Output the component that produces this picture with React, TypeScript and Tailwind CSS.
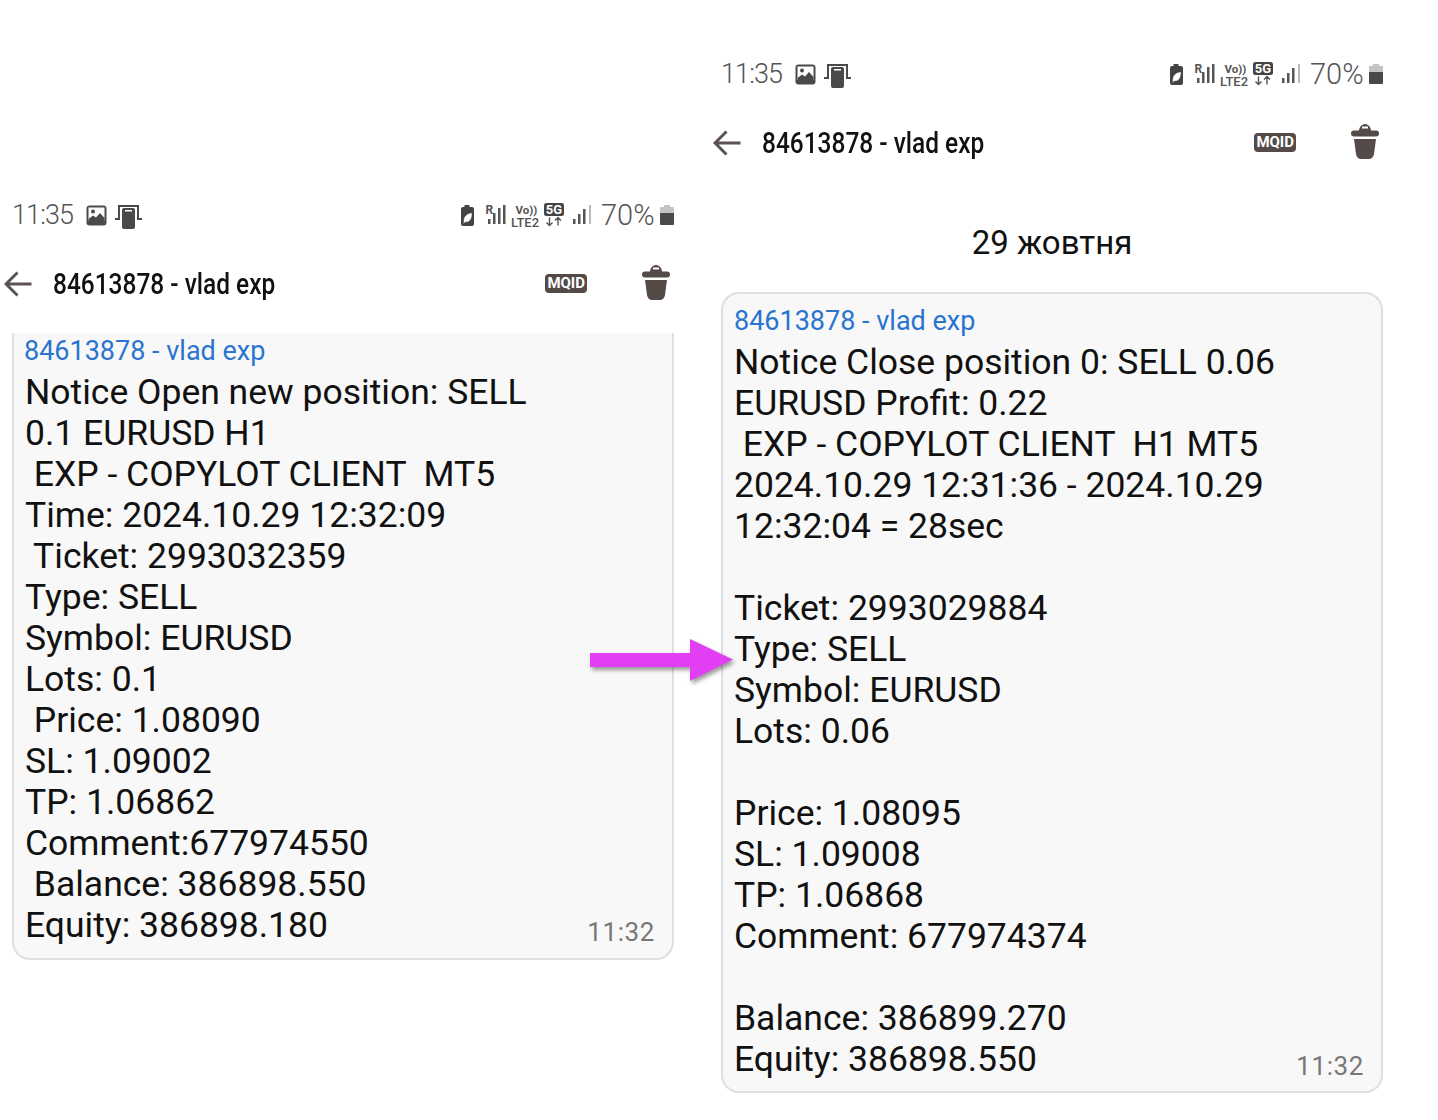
const leftLines = [
  "Notice Open new position: SELL",
  "0.1 EURUSD H1",
  " EXP - COPYLOT CLIENT  MT5",
  "Time: 2024.10.29 12:32:09",
  " Ticket: 2993032359",
  "Type: SELL",
  "Symbol: EURUSD",
  "Lots: 0.1",
  " Price: 1.08090",
  "SL: 1.09002",
  "TP: 1.06862",
  "Comment:677974550",
  " Balance: 386898.550",
  "Equity: 386898.180",
]

const rightLines = [
  "Notice Close position 0: SELL 0.06",
  "EURUSD Profit: 0.22",
  " EXP - COPYLOT CLIENT  H1 MT5",
  "2024.10.29 12:31:36 - 2024.10.29",
  "12:32:04 = 28sec",
  "",
  "Ticket: 2993029884",
  "Type: SELL",
  "Symbol: EURUSD",
  "Lots: 0.06",
  "",
  "Price: 1.08095",
  "SL: 1.09008",
  "TP: 1.06868",
  "Comment: 677974374",
  "",
  "Balance: 386899.270",
  "Equity: 386898.550",
]

function StatusBar() {
  return (
    <div className="flex h-[40px] items-center text-[#555]">
      <span className="w-[62px] whitespace-nowrap text-[27px] font-light leading-none tracking-[-0.9px]">11:35</span>
      {/* gallery */}
      <svg width="21" height="21" viewBox="0 0 21 21" className="ml-[12px]">
        <rect x="0.5" y="0.5" width="20" height="20" rx="3" fill="#4a4a4a" />
        <rect x="2.5" y="2.5" width="16" height="13.5" fill="#fff" />
        <circle cx="7" cy="6.5" r="2" fill="#4a4a4a" />
        <path d="M2.5 14l4.5-3.5 3 2 4-4.5 4.5 5v3h-16z" fill="#4a4a4a" />
      </svg>
      {/* phone link */}
      <svg width="27" height="24" viewBox="0 0 27 24" className="ml-[8px] mt-[3px]">
        <path d="M3 0h21v14h-2V2H5v12H3z" fill="#4a4a4a" />
        <path d="M0 13h5v2H0zM22 13h5v2h-5z" fill="#4a4a4a" />
        <rect x="7" y="3" width="13" height="21" rx="2" fill="#4a4a4a" />
        <rect x="10" y="5" width="7" height="1.5" fill="#fff" />
      </svg>
      <svg width="50" height="30" viewBox="0 0 50 30" className="ml-auto">
        {/* battery saver */}
        <path d="M4.500 7V5h5v2H12a2 2 0 0 1 2 2v15a2 2 0 0 1-2 2H3a2 2 0 0 1-2-2V9a2 2 0 0 1 2-2z" fill="#444" />
        <path d="M4 22c0-6 3-8 7.500-8.500 0 6-2.500 8.500-5.500 8zM3.500 23.500l4-5" fill="#fff" stroke="#fff" strokeWidth="0.6" />
        {/* SIM 1 */}
        <text x="25.500" y="14" fontSize="12" fontWeight="700" fill="#555" fontFamily="Roboto, sans-serif">R</text>
        <path d="M28 19h2.500v5H28zM33 13h2.500v11H33zM38 8h2.500v16H38zM43 5h2.500v19H43z" fill="#555" />
      </svg>
      <div className="flex h-[30px] w-[30px] flex-col items-center justify-center pt-[3px] text-[#555]">
        <div className="h-[12px] pl-[3px] text-[11.500px] font-bold leading-[12px]">Vo))</div>
        <div className="h-[13px] text-[13px] font-medium leading-[13px]">LTE2</div>
      </div>
      <svg width="55" height="30" viewBox="80 0 55 30">
        {/* 5G */}
        <rect x="84" y="3" width="20" height="13" rx="2.500" fill="#444" />
        <text x="94" y="14" fontSize="13" fontWeight="700" fill="#fff" textAnchor="middle" fontFamily="Roboto, sans-serif">5G</text>
        <path d="M89.500 17.500v8M86.500 22.500l3 3 3-3M98 25.500v-8M95 20.500l3-3 3 3" fill="none" stroke="#555" strokeWidth="1.400" />
        {/* SIM 2 */}
        <path d="M113 19h2.500v5H113zM118 14h2.500v10H118zM123 9h2.500v15H123z" fill="#555" />
        <path d="M129 5h2v19h-2z" fill="#bbb" />
      </svg>
      <span className="ml-[6px] w-[53px] whitespace-nowrap text-[29px] font-light leading-none">70%</span>
      <svg width="14" height="20" viewBox="0 0 14 20" className="ml-[6px]">
        <path d="M4 0h6v2h3a1 1 0 0 1 1 1v5H0V3a1 1 0 0 1 1-1h3z" fill="#c4c4c4" />
        <path d="M0 8h14v11a1 1 0 0 1-1 1H1a1 1 0 0 1-1-1z" fill="#4a4a4a" />
      </svg>
    </div>
  )
}

function Header() {
  return (
    <div className="mt-[19px] flex h-[60px] items-center">
      <svg width="28" height="26" viewBox="0 0 28 26" className="-ml-[8px] shrink-0">
        <path d="M27.500 13H2M13.500 1.500L2 13l11.500 11.500" fill="none" stroke="#5b5251" strokeWidth="3" />
      </svg>
      <span className="ml-[21px] origin-left scale-x-[0.815] whitespace-nowrap text-[30px] font-medium leading-none text-[#111]">
        84613878 - vlad exp
      </span>
      <span className="-mt-[2px] ml-auto rounded-[4px] bg-[#544a48] px-[2px] text-[15px] font-bold leading-[19px] text-white">
        MQID
      </span>
      <svg width="28" height="35" viewBox="0 0 28 35" className="-mt-[3px] ml-[55px] mr-[4px] shrink-0">
        <path d="M8 7c0-4 3-7 6-7s6 3 6 7z" fill="#544a48" />
        <rect x="11" y="2.500" width="6" height="2" fill="#fff" />
        <rect x="0" y="6.500" width="28" height="6" rx="3" fill="#544a48" />
        <path d="M3 15h22l-2 15c-.4 3-3 5-5 5h-8c-2 0-4.600-2-5-5z" fill="#544a48" />
      </svg>
    </div>
  )
}

function Bubble({ lines, cut }: { lines: string[]; cut?: boolean }) {
  return (
    <div
      className={
        cut
          ? "mt-[19px] h-[627px] overflow-hidden rounded-b-[18px] border-2 border-t-0 border-[#dfdfdf] bg-[#f8f8f8] pl-[11px] pr-[18px]"
          : "h-[801px] rounded-[18px] border-2 border-[#dfdfdf] bg-[#f8f8f8] pl-[11px] pr-[18px] pt-[7px]"
      }
    >
      <div className={cut ? "-ml-px -mt-[2px] text-[27px] leading-[41px] text-[#2a74d0]" : "text-[27px] leading-[41px] text-[#2a74d0]"}>
        84613878 - vlad exp
      </div>
      <div className="flex items-end justify-between">
        <div className="whitespace-pre text-[35.500px] leading-[41px] text-[#111]">
          {lines.map((line, i) => (
            <div key={i} className="h-[41px]">
              {line}
            </div>
          ))}
        </div>
        <span className="-mb-[7px] -mr-[1px] text-[26px] leading-[41px] tracking-[0.6px] text-[#777]">11:32</span>
      </div>
    </div>
  )
}

export default function App() {
  return (
    <div className="relative h-[1120px] w-[1438px] overflow-hidden bg-white [font-family:Roboto,sans-serif]">
      <div className="flex gap-[47px] px-[12px]">
        <div className="w-[662px] pt-[195px]">
          <StatusBar />
          <Header />
          <Bubble lines={leftLines} cut />
        </div>
        <div className="w-[662px] pt-[54px]">
          <StatusBar />
          <Header />
          <div className="mb-[29px] mt-[50px] text-center text-[33px] leading-[40px] text-[#111]">29 жовтня</div>
          <Bubble lines={rightLines} />
        </div>
      </div>
      {/* annotation arrow */}
      <svg width="160" height="56" viewBox="0 0 160 56" className="absolute left-[585px] top-[632px] drop-shadow-[2px_3px_2px_rgba(0,0,0,0.4)]">
        <path d="M5 21h100V7l43 20.500L105 49V35H5z" fill="#e23ff5" />
      </svg>
    </div>
  )
}
